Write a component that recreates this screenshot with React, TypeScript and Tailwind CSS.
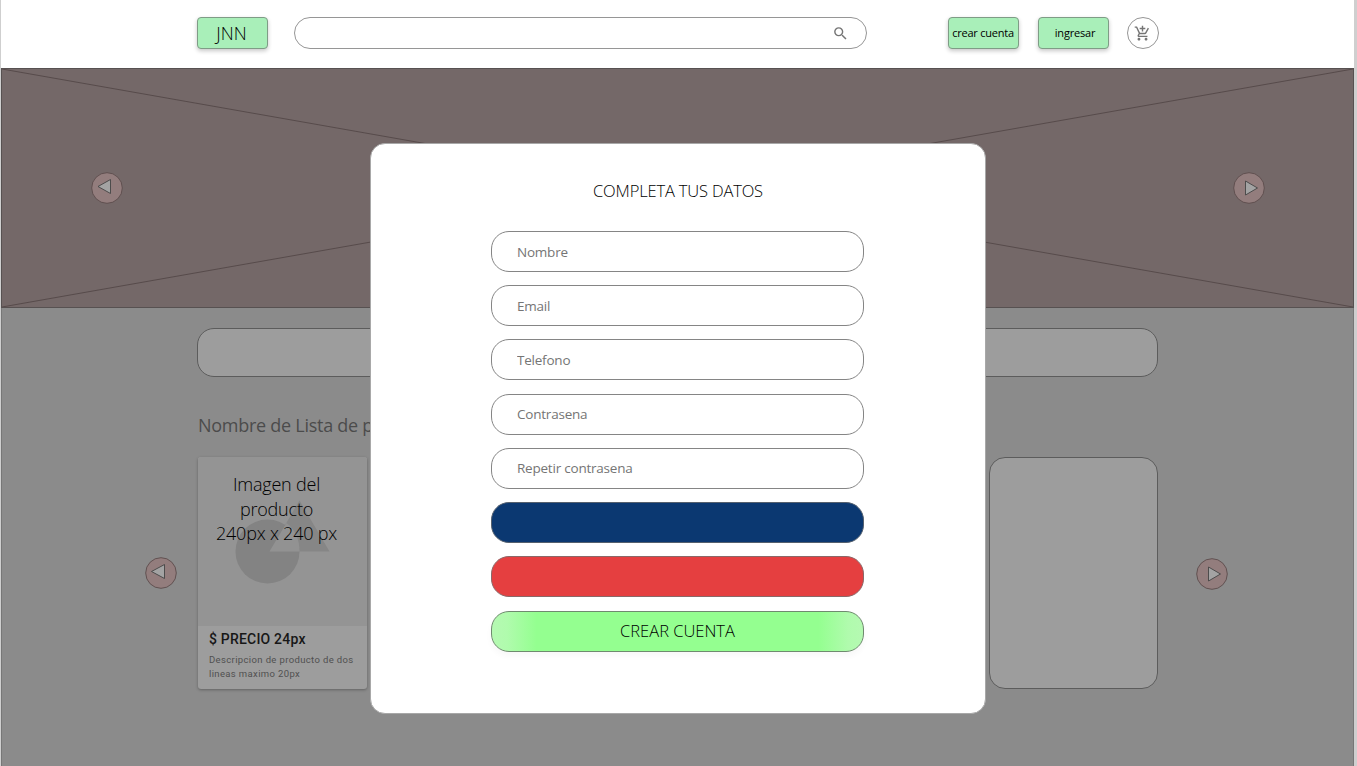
import type { ReactNode } from "react";
import { MdAddShoppingCart, MdSearch } from "react-icons/md";

const fields = ["Nombre", "Email", "Telefono", "Contrasena", "Repetir contrasena"];

function HeaderButton({ children }: { children: ReactNode }) {
  return (
    <button className="flex h-8 w-[71px] shrink-0 items-center justify-center rounded-[4px] border border-[#7f9c86] bg-[#a9efb9] whitespace-nowrap text-black shadow-[0_2px_4px_rgba(0,0,0,0.22)]">
      {children}
    </button>
  );
}

function ArrowButton({ points }: { points: string }) {
  return (
    <button className="relative block h-8 w-8 shrink-0">
      <svg className="block" width="32" height="32" viewBox="0 0 32 32">
        <circle cx="16" cy="16" r="15.3" fill="#937d7d" stroke="#5b4c4c" strokeWidth="0.9" />
        <polygon points={points} fill="#a3a3a3" stroke="#444" strokeWidth="0.9" />
      </svg>
    </button>
  );
}

function Header() {
  return (
    <header className="flex h-[68px] shrink-0 items-start bg-white pt-[17px] pl-[196px]">
      <HeaderButton>
        <span className="pr-[2px] text-[18px] leading-none font-[350]">JNN</span>
      </HeaderButton>
      <div className="ml-[26px] flex h-8 w-[573px] shrink-0 items-center justify-end rounded-full border border-[#969696] pr-[17px]">
        <MdSearch className="h-[17px] w-[17px] text-[#757575]" />
      </div>
      <div className="ml-[81px] flex gap-[19px]">
        <HeaderButton>
          <span className="pr-px pb-px text-[11px] leading-none tracking-[-0.22px]">crear cuenta</span>
        </HeaderButton>
        <HeaderButton>
          <span className="pb-px pl-[3px] text-[11px] leading-none tracking-[-0.2px]">ingresar</span>
        </HeaderButton>
      </div>
      <button className="ml-[17.500px] flex h-8 w-8 items-center justify-center rounded-full border border-[#969696]">
        <MdAddShoppingCart className="h-[17px] w-[17px] text-[#757575]" />
      </button>
    </header>
  );
}

function Hero() {
  return (
    <section className="relative flex h-60 shrink-0 items-center justify-between border border-[#575151] bg-[#746868] pr-[88px] pl-[89px]">
      <svg className="absolute inset-0 h-full w-full" viewBox="0 0 1351 238" preserveAspectRatio="none">
        <path d="M0 0L1351 238M0 238L1351 0" stroke="#574b4b" strokeWidth="1" />
      </svg>
      <ArrowButton points="7,14.5 19.5,7.5 19.5,21.5" />
      <ArrowButton points="12.5,9 24.5,16 12.5,23" />
    </section>
  );
}

function ProductCard() {
  return (
    <article className="flex h-[232px] w-[169px] flex-col rounded-[3px] bg-[#9d9d9d] shadow-[0_1px_3px_rgba(0,0,0,0.3)]">
      <div className="relative h-[169px] rounded-t-[3px] bg-[#949494]">
        <svg className="absolute inset-0" width="169" height="169" viewBox="0 0 169 169">
          <circle cx="69.5" cy="94.5" r="32" fill="#838383" />
          <path d="M101.500 43.500L131.500 94.500H71.500Z" fill="#868686" />
          <path d="M71.500 94.500L88.500 66Q101.500 76 101.500 94.500Z" fill="#929292" />
        </svg>
        <p className="relative pt-[15px] pr-[12px] text-center text-[18px] leading-[24.5px] font-[350] tracking-[-0.2px] whitespace-nowrap text-black">
          Imagen del
          <br />
          producto
          <br />
          240px x 240 px
        </p>
      </div>
      <div className="px-[11px] pt-[5px] font-[Roboto]">
        <h3 className="text-[14px] leading-[16px] font-medium tracking-[0.2px] whitespace-nowrap text-[#171717]">$ PRECIO 24px</h3>
        <p className="mt-[6px] text-[9.5px] leading-[14px] tracking-[0.36px] whitespace-nowrap text-[#505050]">
          Descripcion de producto de dos
          <br />
          lineas maximo 20px
        </p>
      </div>
    </article>
  );
}

function Catalog() {
  return (
    <main className="flex flex-1 flex-col border-x border-[#777] bg-[#8b8b8b] pt-5">
      <div className="ml-[195px] h-[49px] w-[961px] shrink-0 rounded-[17px] border border-[#5c5c5c] bg-[#9d9d9d]" />
      <h2 className="mt-[36px] ml-[196px] text-[18px] leading-[25px] tracking-[-0.27px] whitespace-nowrap text-[#4b4b4b]">
        Nombre de Lista de p
      </h2>
      <div className="mt-[19px] flex items-center pl-[142.500px]">
        <ArrowButton points="6.500,14.500 19.500,7.500 19.500,21.500" />
        <div className="ml-[21.500px] flex w-[960px] justify-between">
          <ProductCard />
          <div className="h-[232px] w-[169px] rounded-[16px] border border-[#5c5c5c] bg-[#9d9d9d]" />
        </div>
        <div className="ml-[37.500px] pt-[2px]">
          <ArrowButton points="12.500,9 24.500,16 12.500,23" />
        </div>
      </div>
    </main>
  );
}

function RegisterDialog() {
  return (
    <div
      role="dialog"
      className="absolute top-[143px] left-[369px] flex h-[571px] w-[616px] flex-col items-center rounded-[15px] border border-[#a8a8a8] bg-white pt-[35px]"
    >
      <h1 className="text-[16.5px] leading-6 font-[350] tracking-[-0.16px] whitespace-nowrap text-black">COMPLETA TUS DATOS</h1>
      <form className="mr-px mt-[28px] flex w-[373px] flex-col gap-[13.220px]">
        {fields.map((label) => (
          <input
            key={label}
            placeholder={label}
            className="h-[41px] w-full rounded-[18px] border border-[#858585] bg-white px-[25px] text-[13.5px] tracking-[-0.22px] placeholder:text-[#757575]"
          />
        ))}
        <button type="button" className="h-[41px] rounded-[18px] border border-[#55606e] bg-[#0b3871]" />
        <button type="button" className="h-[41px] rounded-[18px] border border-[#8a6868] bg-[#e53f40]" />
        <button
          type="button"
          className="h-[41px] rounded-[18px] border border-[#6f8a6f] bg-[linear-gradient(90deg,#b5f9b2_0%,#b0fbad_4%,#94ff90_12%,#94ff90_88%,#b0fbad_96%,#b5f9b2_100%)] pt-px text-[16.5px] font-[350] text-black shadow-[0_4px_6px_rgba(0,0,0,0.03)]"
        >
          CREAR CUENTA
        </button>
      </form>
    </div>
  );
}

export default function App() {
  return (
    <div className="relative flex h-[766px] w-[1357px] flex-col overflow-hidden border-r-[3px] border-l border-r-[#cfcfcf] border-l-[#cfcfcf] bg-white font-['Open_Sans','Noto_Sans',sans-serif]">
      <Header />
      <Hero />
      <Catalog />
      <RegisterDialog />
    </div>
  );
}
